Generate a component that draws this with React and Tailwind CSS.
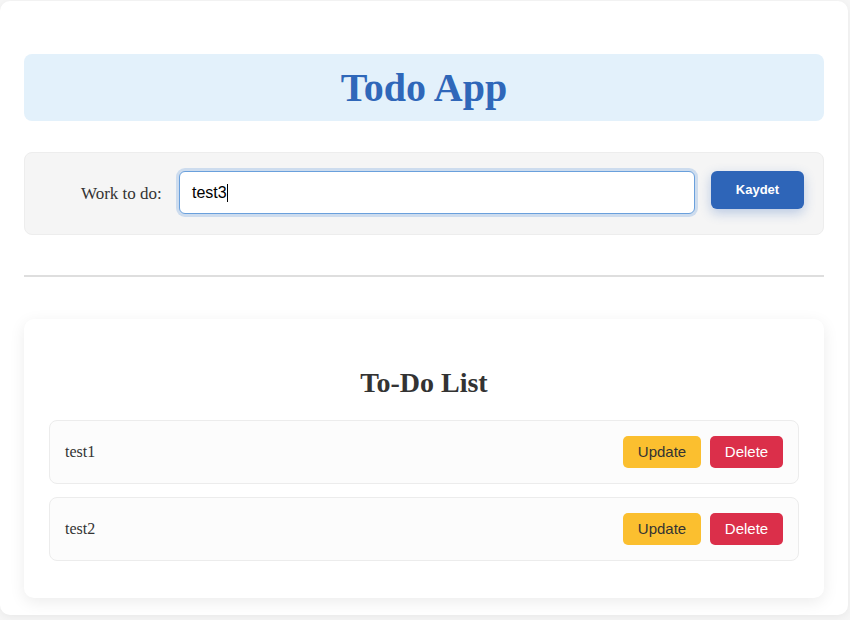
import React from "react";

const serif = { fontFamily: '"Liberation Serif", "Times New Roman", serif' };
const sans = { fontFamily: '"Liberation Sans", Arial, sans-serif' };

function Item({ text }) {
  return (
    <div className="h-[64px] rounded-lg border border-[#ececec] bg-[#fcfcfc] flex items-center pl-[15px] pr-[15px]">
      <span className="text-[16px] text-[#333]" style={serif}>{text}</span>
      <div className="ml-auto flex gap-[9px]" style={sans}>
        <button className="h-[32px] w-[78px] rounded-[5px] bg-[#fbbf2f] text-[#333] text-[15px]">Update</button>
        <button className="h-[32px] w-[73px] rounded-[5px] bg-[#db2f4a] text-white text-[15px]">Delete</button>
      </div>
    </div>
  );
}

export default function App() {
  return (
    <div className="h-[620px] w-[850px] overflow-hidden bg-[#f6f6f6]">
      <div className="w-[848px] h-[614px] mt-[1px] rounded-[10px] bg-white shadow-[0_2px_10px_rgba(0,0,0,0.06)] px-6 pt-[53px]">
        <div className="h-[67px] rounded-lg bg-[#e3f1fb] flex items-center justify-center">
          <h1 className="text-[40px] font-bold text-[#2f67b9] leading-none" style={serif}>Todo App</h1>
        </div>

        <div className="mt-[31px] h-[83px] rounded-lg bg-[#f5f5f5] border border-[#ededed] flex items-start pt-[18px] pl-[56px] pr-[19px]">
          <label className="w-[82px] text-[17px] text-[#333] mt-[10px] whitespace-nowrap" style={serif}>Work to do:</label>
          <div className="ml-[16px] flex-1 h-[43px] rounded-[6px] border border-[#6aa0dc] bg-white shadow-[0_0_0_3px_rgba(66,133,214,0.22)] flex items-center pl-[12px]">
            <span className="text-[16px] text-black" style={sans}>test3</span>
            <span className="w-px h-[18px] bg-black" />
          </div>
          <button className="ml-[16px] w-[93px] h-[38px] rounded-[6px] bg-[#2e65b8] text-white text-[13px] font-bold shadow-[0_4px_12px_rgba(46,101,184,0.3)]" style={sans}>Kaydet</button>
        </div>

        <div className="mt-[40px] h-[2px] bg-[#dedede]" />

        <div className="mt-[42px] h-[279px] rounded-[10px] bg-white shadow-[0_4px_16px_rgba(0,0,0,0.08)] px-[25px] pt-[48px]">
          <h2 className="text-[28px] font-bold text-[#333] text-center leading-[32px]" style={serif}>To-Do List</h2>
          <div className="mt-[21px] flex flex-col gap-[13px]">
            <Item text="test1" />
            <Item text="test2" />
          </div>
        </div>
      </div>
    </div>
  );
}
